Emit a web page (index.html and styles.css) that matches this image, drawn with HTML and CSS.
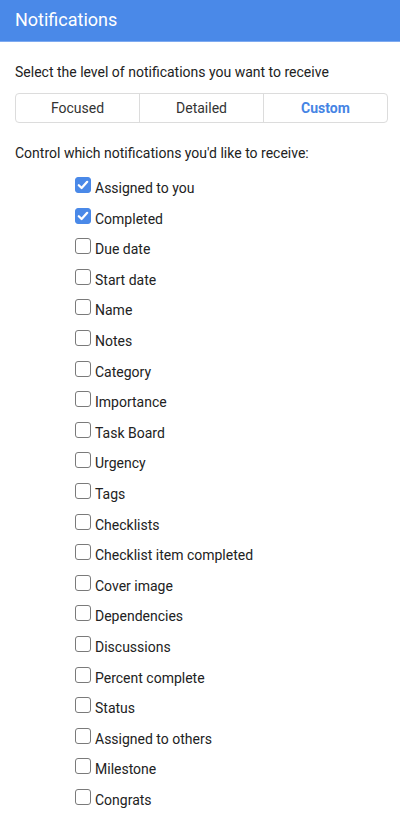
FILE: index.html
```html
<!DOCTYPE html>
<html>
<head>
<meta charset="utf-8">
<link rel="stylesheet" href="styles.css">
</head>
<body>
<header class="header">Notifications</header>
<main class="content">
  <p class="intro">Select the level of notifications you want to receive</p>
  <div class="tabs">
    <div class="tab">Focused</div>
    <div class="tab">Detailed</div>
    <div class="tab active">Custom</div>
  </div>
  <p class="control">Control which notifications you'd like to receive:</p>
  <ul class="list">
    <li class="row"><span class="box checked"><svg viewBox="0 0 16 16"><path d="M3.2 8.3 L6.4 11.4 L12.8 4.4" fill="none" stroke="#fff" stroke-width="2.6" stroke-linecap="round" stroke-linejoin="round"/></svg></span><span class="label">Assigned to you</span></li>
    <li class="row"><span class="box checked"><svg viewBox="0 0 16 16"><path d="M3.2 8.3 L6.4 11.4 L12.8 4.4" fill="none" stroke="#fff" stroke-width="2.6" stroke-linecap="round" stroke-linejoin="round"/></svg></span><span class="label">Completed</span></li>
    <li class="row"><span class="box"></span><span class="label">Due date</span></li>
    <li class="row"><span class="box"></span><span class="label">Start date</span></li>
    <li class="row"><span class="box"></span><span class="label">Name</span></li>
    <li class="row"><span class="box"></span><span class="label">Notes</span></li>
    <li class="row"><span class="box"></span><span class="label">Category</span></li>
    <li class="row"><span class="box"></span><span class="label">Importance</span></li>
    <li class="row"><span class="box"></span><span class="label">Task Board</span></li>
    <li class="row"><span class="box"></span><span class="label">Urgency</span></li>
    <li class="row"><span class="box"></span><span class="label">Tags</span></li>
    <li class="row"><span class="box"></span><span class="label">Checklists</span></li>
    <li class="row"><span class="box"></span><span class="label">Checklist item completed</span></li>
    <li class="row"><span class="box"></span><span class="label">Cover image</span></li>
    <li class="row"><span class="box"></span><span class="label">Dependencies</span></li>
    <li class="row"><span class="box"></span><span class="label">Discussions</span></li>
    <li class="row"><span class="box"></span><span class="label">Percent complete</span></li>
    <li class="row"><span class="box"></span><span class="label">Status</span></li>
    <li class="row"><span class="box"></span><span class="label">Assigned to others</span></li>
    <li class="row"><span class="box"></span><span class="label">Milestone</span></li>
    <li class="row"><span class="box"></span><span class="label">Congrats</span></li>
  </ul>
</main>
</body>
</html>
```
FILE: styles.css
```css
* { box-sizing: border-box; }
html, body { margin: 0; padding: 0; background: #fff; }
body {
  font-family: Roboto, "Liberation Sans", sans-serif;
  color: #222;
  font-size: 14px;
}
.header {
  height: 42px;
  background: #4a89e8;
  border-bottom: 1px solid #7eaaf0;
  color: #fff;
  font-size: 18px;
  line-height: 40px;
  padding-left: 15px;
}
.content { padding: 0 12px 0 15px; }
.intro {
  margin: 20px 0 0;
  line-height: 20px;
  font-size: 14px;
  color: #222;
}
.tabs {
  margin-top: 11px;
  height: 30px;
  display: flex;
  border: 1px solid #dcdcdc;
  border-radius: 4px;
  width: 373px;
}
.tab {
  flex: 1;
  display: flex;
  align-items: center;
  justify-content: center;
  font-size: 14px;
  color: #333;
  border-left: 1px solid #dcdcdc;
}
.tab:first-child { border-left: none; }
.tab.active { color: #4584e4; font-weight: bold; }
.control {
  margin: 20px 0 0;
  line-height: 20px;
  font-size: 14px;
  color: #222;
}
.list {
  list-style: none;
  margin: 7px 0 0;
  padding: 0 0 0 60px;
}
.row {
  height: 30.6px;
  display: flex;
  align-items: flex-start;
}
.box {
  width: 16px;
  height: 16px;
  margin-top: 7px;
  border: 1.3px solid #7a7a7a;
  border-radius: 3px;
  background: #fff;
  flex: none;
  display: flex;
}
.box.checked {
  background: #4a89e8;
  border-color: #4a89e8;
}
.box svg { width: 100%; height: 100%; }
.label {
  margin-left: 4px;
  margin-top: 8px;
  line-height: 20px;
  color: #222;
}
```
